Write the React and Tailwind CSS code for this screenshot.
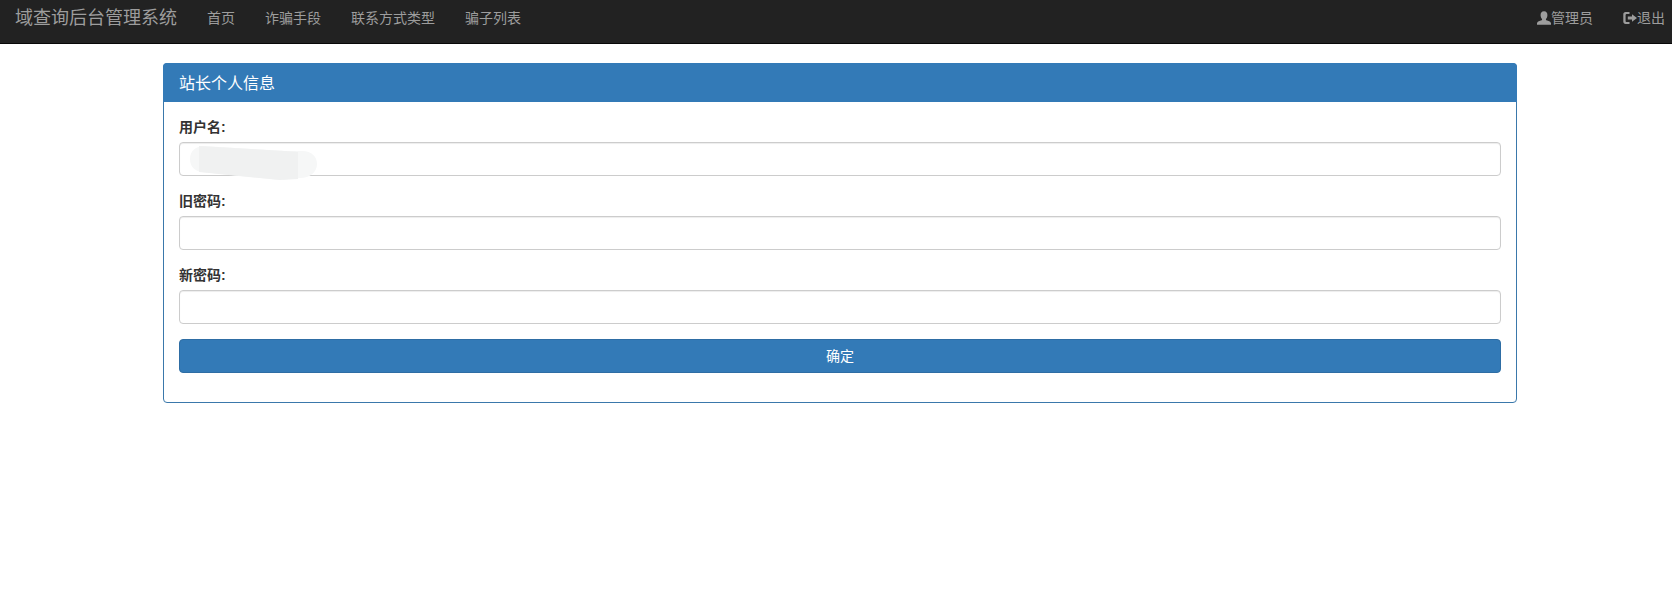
const font = '[font-family:"Liberation_Sans","Noto_Sans_CJK_SC",sans-serif]'

function UserIcon() {
  return (
    <svg width="14" height="14" viewBox="0 0 14 14" fill="currentColor">
      <path d="M7 0.2C9.4 0.2 10.6 2 10.4 4.4C10.3 5.9 9.8 7.1 9 7.9C8.8 8.5 8.9 9 9.5 9.3C11.2 10 13.7 10.4 14 12.2V13.8H0V12.2C0.3 10.4 2.8 10 4.5 9.3C5.1 9 5.2 8.5 5 7.9C4.2 7.1 3.7 5.9 3.6 4.4C3.4 2 4.6 0.2 7 0.2Z" />
    </svg>
  )
}

function LogoutIcon() {
  return (
    <svg width="14" height="14" viewBox="0 0 14 14" fill="currentColor">
      <path d="M2.5 1H6.5V3H3.5C3 3 2.6 3.4 2.6 4V10C2.6 10.6 3 11 3.5 11H6.5V13H2.5C1.2 13 0.3 12 0.3 10.8V3.2C0.3 2 1.2 1 2.5 1Z" />
      <path d="M9 3.2L14 7L9 10.8V8.5H4.8V5.5H9V3.2Z" />
    </svg>
  )
}

function Field({ label, children }) {
  return (
    <div className="mb-[15px]">
      <label className="block mb-[5px] text-sm leading-5 font-bold text-[#333]">{label}:</label>
      {children}
    </div>
  )
}

const inputCls = 'block w-full h-[34px] px-3 bg-white border border-[#ccc] rounded shadow-[inset_0_1px_1px_rgba(0,0,0,0.075)] outline-none'

export default function App() {
  const navItems = ['首页', '诈骗手段', '联系方式类型', '骗子列表']

  return (
    <div className={`min-h-[599px] bg-white ${font}`}>
      <nav className="flex items-center justify-between h-11 pl-[15px] pr-[7px] pb-[7px] bg-[#222] border-b border-[#080808] text-[#9d9d9d]">
        <div className="flex items-center">
          <a className="text-lg leading-5 pr-[15px]">域查询后台管理系统</a>
          <ul className="flex">
            {navItems.map(item => (
              <li key={item} className="px-[15px] text-sm leading-5">{item}</li>
            ))}
          </ul>
        </div>
        <ul className="flex text-sm leading-5">
          <li className="flex items-center px-[15px]"><UserIcon />管理员</li>
          <li className="flex items-center pl-[15px]"><LogoutIcon />退出</li>
        </ul>
      </nav>

      <div className="ml-[163px] w-[1354px] mt-[19px] bg-white border border-[#3a78ab] rounded">
        <div className="h-[39px] -mt-px -mx-px pl-4 pt-[2px] flex items-center bg-[#337ab7] rounded-t text-white text-base">站长个人信息</div>
        <div className="p-[15px]">
          <Field label="用户名">
            <div className="relative">
              <input className={inputCls} />
              <svg width="130" height="36" viewBox="0 0 130 36" className="absolute left-[11px] top-[3px]">
                <path d="M14 1L95 6H112C122 6 127 12 127 19C127 27 120 33 110 33L90 35L12 27C4 26 0 21 0 14C0 6 6 1 14 1Z" fill="#f6f7f7" />
                <path d="M9 1L95 6L108 7V34L90 35L9 27Z" fill="#f0f1f1" />
              </svg>
            </div>
          </Field>
          <Field label="旧密码"><input type="password" className={inputCls} /></Field>
          <Field label="新密码"><input type="password" className={inputCls} /></Field>
          <button className="block w-full h-[34px] mb-[14px] bg-[#337ab7] border border-[#2e6da4] rounded text-white text-sm">确定</button>
        </div>
      </div>
    </div>
  )
}
